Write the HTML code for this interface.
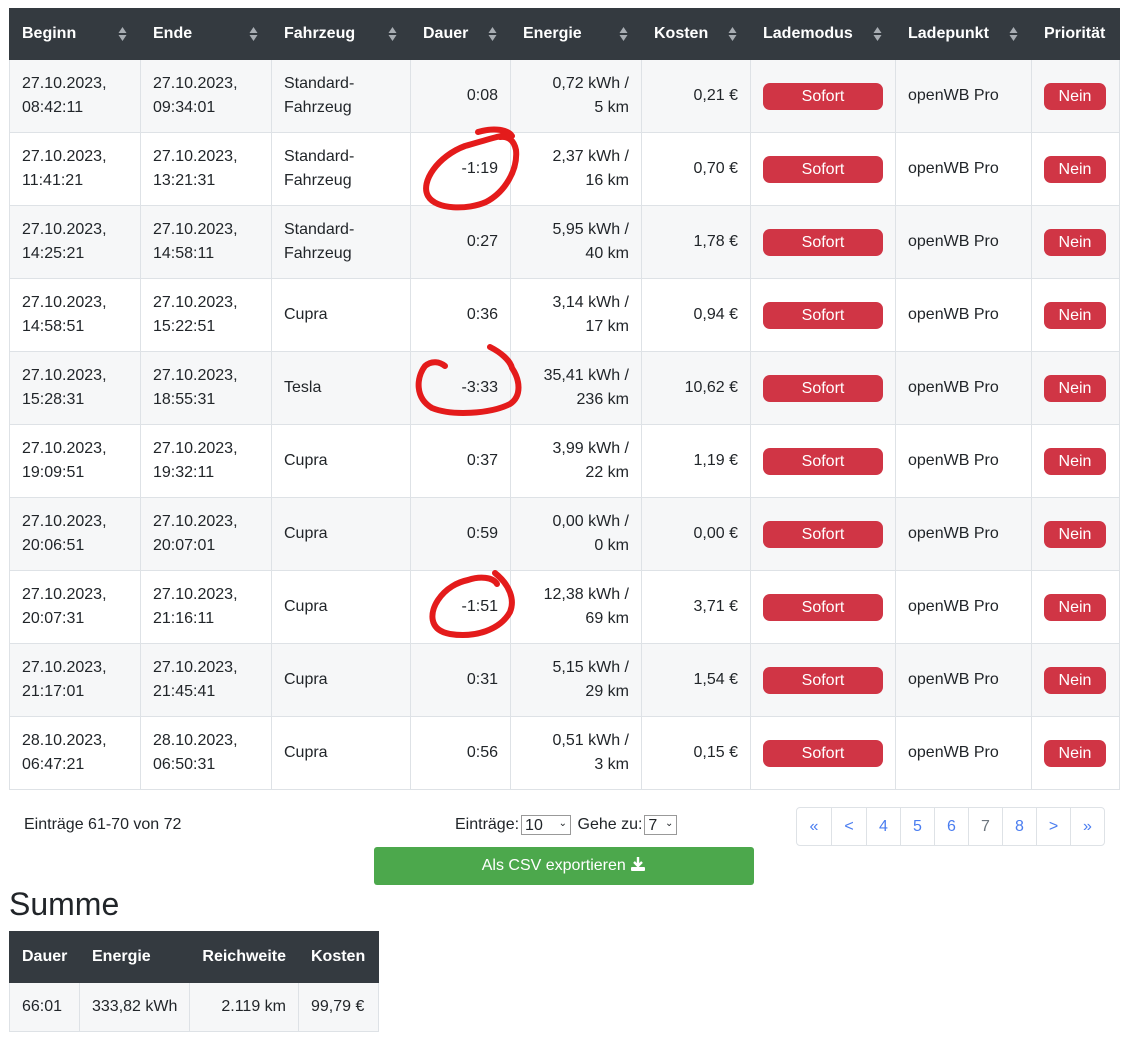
<!DOCTYPE html>
<html><head><meta charset="utf-8"><style>
body{margin:0;background:#fff;font-family:"Liberation Sans",sans-serif;font-size:16px;color:#212529;position:relative;width:1122px;height:1049px;overflow:hidden}
table{border-collapse:collapse;table-layout:fixed;position:absolute}
#t{left:9px;top:8px;width:1110px}
th{background:#343a40;color:#fff;font-weight:bold;text-align:left;padding:0 12px;height:50px;position:relative;border:1px solid #343a40;white-space:nowrap}
th .s{position:absolute;right:13px;top:17px;width:9px;height:16px}
td{border:1px solid #dee2e6;padding:0 12px;height:72px;line-height:24px;vertical-align:middle;white-space:nowrap}
tbody tr:nth-child(odd) td{background:#f6f7f8}
.r{text-align:right}
.b{display:inline-block;background:#d03545;color:#fff;border-radius:7px;text-align:center;height:27px;line-height:27px}
.so{width:120px}.ne{width:62px}
#s{left:9px;top:931px;width:369px}
#s th{height:50px}
#s td{height:48px}
</style></head><body>
<table id="t">
<colgroup><col style="width:131px"><col style="width:131px"><col style="width:139px"><col style="width:100px"><col style="width:131px"><col style="width:109px"><col style="width:145px"><col style="width:136px"><col style="width:88px"></colgroup>
<thead><tr>
<th>Beginn<svg class="s" viewBox="0 0 9 16"><path d="M4.5 1L8.5 7H0.5Z M4.5 15L8.5 9H0.5Z" fill="#a8adb3"/></svg></th>
<th>Ende<svg class="s" viewBox="0 0 9 16"><path d="M4.5 1L8.5 7H0.5Z M4.5 15L8.5 9H0.5Z" fill="#a8adb3"/></svg></th>
<th>Fahrzeug<svg class="s" viewBox="0 0 9 16"><path d="M4.5 1L8.5 7H0.5Z M4.5 15L8.5 9H0.5Z" fill="#a8adb3"/></svg></th>
<th>Dauer<svg class="s" viewBox="0 0 9 16"><path d="M4.5 1L8.5 7H0.5Z M4.5 15L8.5 9H0.5Z" fill="#a8adb3"/></svg></th>
<th>Energie<svg class="s" viewBox="0 0 9 16"><path d="M4.5 1L8.5 7H0.5Z M4.5 15L8.5 9H0.5Z" fill="#a8adb3"/></svg></th>
<th>Kosten<svg class="s" viewBox="0 0 9 16"><path d="M4.5 1L8.5 7H0.5Z M4.5 15L8.5 9H0.5Z" fill="#a8adb3"/></svg></th>
<th>Lademodus<svg class="s" viewBox="0 0 9 16"><path d="M4.5 1L8.5 7H0.5Z M4.5 15L8.5 9H0.5Z" fill="#a8adb3"/></svg></th>
<th>Ladepunkt<svg class="s" viewBox="0 0 9 16"><path d="M4.5 1L8.5 7H0.5Z M4.5 15L8.5 9H0.5Z" fill="#a8adb3"/></svg></th>
<th>Priorität</th>
</tr></thead>
<tbody>
<tr><td>27.10.2023,<br>08:42:11</td><td>27.10.2023,<br>09:34:01</td><td>Standard-<br>Fahrzeug</td><td class="r">0:08</td><td class="r">0,72 kWh /<br>5 km</td><td class="r">0,21 €</td><td><span class="b so">Sofort</span></td><td>openWB Pro</td><td><span class="b ne">Nein</span></td></tr>
<tr><td>27.10.2023,<br>11:41:21</td><td>27.10.2023,<br>13:21:31</td><td>Standard-<br>Fahrzeug</td><td class="r">-1:19</td><td class="r">2,37 kWh /<br>16 km</td><td class="r">0,70 €</td><td><span class="b so">Sofort</span></td><td>openWB Pro</td><td><span class="b ne">Nein</span></td></tr>
<tr><td>27.10.2023,<br>14:25:21</td><td>27.10.2023,<br>14:58:11</td><td>Standard-<br>Fahrzeug</td><td class="r">0:27</td><td class="r">5,95 kWh /<br>40 km</td><td class="r">1,78 €</td><td><span class="b so">Sofort</span></td><td>openWB Pro</td><td><span class="b ne">Nein</span></td></tr>
<tr><td>27.10.2023,<br>14:58:51</td><td>27.10.2023,<br>15:22:51</td><td>Cupra</td><td class="r">0:36</td><td class="r">3,14 kWh /<br>17 km</td><td class="r">0,94 €</td><td><span class="b so">Sofort</span></td><td>openWB Pro</td><td><span class="b ne">Nein</span></td></tr>
<tr><td>27.10.2023,<br>15:28:31</td><td>27.10.2023,<br>18:55:31</td><td>Tesla</td><td class="r">-3:33</td><td class="r">35,41 kWh /<br>236 km</td><td class="r">10,62 €</td><td><span class="b so">Sofort</span></td><td>openWB Pro</td><td><span class="b ne">Nein</span></td></tr>
<tr><td>27.10.2023,<br>19:09:51</td><td>27.10.2023,<br>19:32:11</td><td>Cupra</td><td class="r">0:37</td><td class="r">3,99 kWh /<br>22 km</td><td class="r">1,19 €</td><td><span class="b so">Sofort</span></td><td>openWB Pro</td><td><span class="b ne">Nein</span></td></tr>
<tr><td>27.10.2023,<br>20:06:51</td><td>27.10.2023,<br>20:07:01</td><td>Cupra</td><td class="r">0:59</td><td class="r">0,00 kWh /<br>0 km</td><td class="r">0,00 €</td><td><span class="b so">Sofort</span></td><td>openWB Pro</td><td><span class="b ne">Nein</span></td></tr>
<tr><td>27.10.2023,<br>20:07:31</td><td>27.10.2023,<br>21:16:11</td><td>Cupra</td><td class="r">-1:51</td><td class="r">12,38 kWh /<br>69 km</td><td class="r">3,71 €</td><td><span class="b so">Sofort</span></td><td>openWB Pro</td><td><span class="b ne">Nein</span></td></tr>
<tr><td>27.10.2023,<br>21:17:01</td><td>27.10.2023,<br>21:45:41</td><td>Cupra</td><td class="r">0:31</td><td class="r">5,15 kWh /<br>29 km</td><td class="r">1,54 €</td><td><span class="b so">Sofort</span></td><td>openWB Pro</td><td><span class="b ne">Nein</span></td></tr>
<tr><td>28.10.2023,<br>06:47:21</td><td>28.10.2023,<br>06:50:31</td><td>Cupra</td><td class="r">0:56</td><td class="r">0,51 kWh /<br>3 km</td><td class="r">0,15 €</td><td><span class="b so">Sofort</span></td><td>openWB Pro</td><td><span class="b ne">Nein</span></td></tr>
</tbody></table>

<svg style="position:absolute;left:0;top:0" width="1122" height="1049">
<g fill="none" stroke="#e41b1b" stroke-width="6" stroke-linecap="round" stroke-linejoin="round">
<path d="M478 132 C495 127 508 130 512 136 C506 133 490 139 465 146 C438 156 420 182 428 196 C436 210 468 210 486 202 C505 192 518 170 516 150 C514 140 508 136 500 137"/>
<path d="M490 347 C500 352 510 360 512 368 C520 380 522 396 510 404 C490 414 452 416 432 408 C415 398 416 378 425 366 C432 360 440 362 445 366"/>
<path d="M495 573 C510 585 515 600 510 612 C500 630 475 638 450 634 C428 630 430 612 438 600 C446 588 458 582 468 580 C480 576 493 577 497 584"/>
</g></svg>

<div style="position:absolute;left:24px;top:816px">Einträge 61-70 von 72</div>
<div style="position:absolute;left:455px;top:815px;display:flex;align-items:center;gap:2px">Einträge:<span style="display:inline-block;border:1px solid #999;height:20px;width:50px;line-height:20px;padding-left:3px;box-sizing:border-box;position:relative">10<span style="position:absolute;right:3px;top:-2px;font-size:10px">&#8964;</span></span>&nbsp;Gehe zu:<span style="display:inline-block;border:1px solid #999;height:20px;width:33px;line-height:20px;padding-left:3px;box-sizing:border-box;position:relative">7<span style="position:absolute;right:3px;top:-2px;font-size:10px">&#8964;</span></span></div>
<div style="position:absolute;left:796px;top:807px;height:37px;border:1px solid #dee2e6;border-radius:4px;display:flex;color:#4a7df0">
<span style="width:34px;text-align:center;line-height:37px;border-right:1px solid #dee2e6">«</span><span style="width:34px;text-align:center;line-height:37px;border-right:1px solid #dee2e6">&lt;</span><span style="width:33px;text-align:center;line-height:37px;border-right:1px solid #dee2e6">4</span><span style="width:33px;text-align:center;line-height:37px;border-right:1px solid #dee2e6">5</span><span style="width:33px;text-align:center;line-height:37px;border-right:1px solid #dee2e6">6</span><span style="width:33px;text-align:center;line-height:37px;border-right:1px solid #dee2e6;color:#6c757d">7</span><span style="width:33px;text-align:center;line-height:37px;border-right:1px solid #dee2e6">8</span><span style="width:33px;text-align:center;line-height:37px;border-right:1px solid #dee2e6">&gt;</span><span style="width:33px;text-align:center;line-height:37px">»</span></div>
<div style="position:absolute;left:374px;top:847px;width:380px;height:38px;background:#4ca84c;border-radius:3px;color:#fff;text-align:center;line-height:38px">Als CSV exportieren <svg width="16" height="16" viewBox="0 0 16 16" style="vertical-align:-2px"><path d="M8 1V10M4 6L8 10L12 6" stroke="#fff" stroke-width="2.4" fill="none"/><rect x="1" y="11" width="14" height="4" rx="1" fill="#fff"/></svg></div>
<div style="position:absolute;left:9px;top:884px;font-size:32px;line-height:40px">Summe</div>
<table id="s"><colgroup><col style="width:70px"><col style="width:110px"><col style="width:109px"><col style="width:80px"></colgroup>
<thead><tr><th>Dauer</th><th>Energie</th><th class="r" style="text-align:right">Reichweite</th><th>Kosten</th></tr></thead>
<tbody><tr><td>66:01</td><td>333,82 kWh</td><td class="r">2.119 km</td><td>99,79 €</td></tr></tbody></table>
</body></html>
